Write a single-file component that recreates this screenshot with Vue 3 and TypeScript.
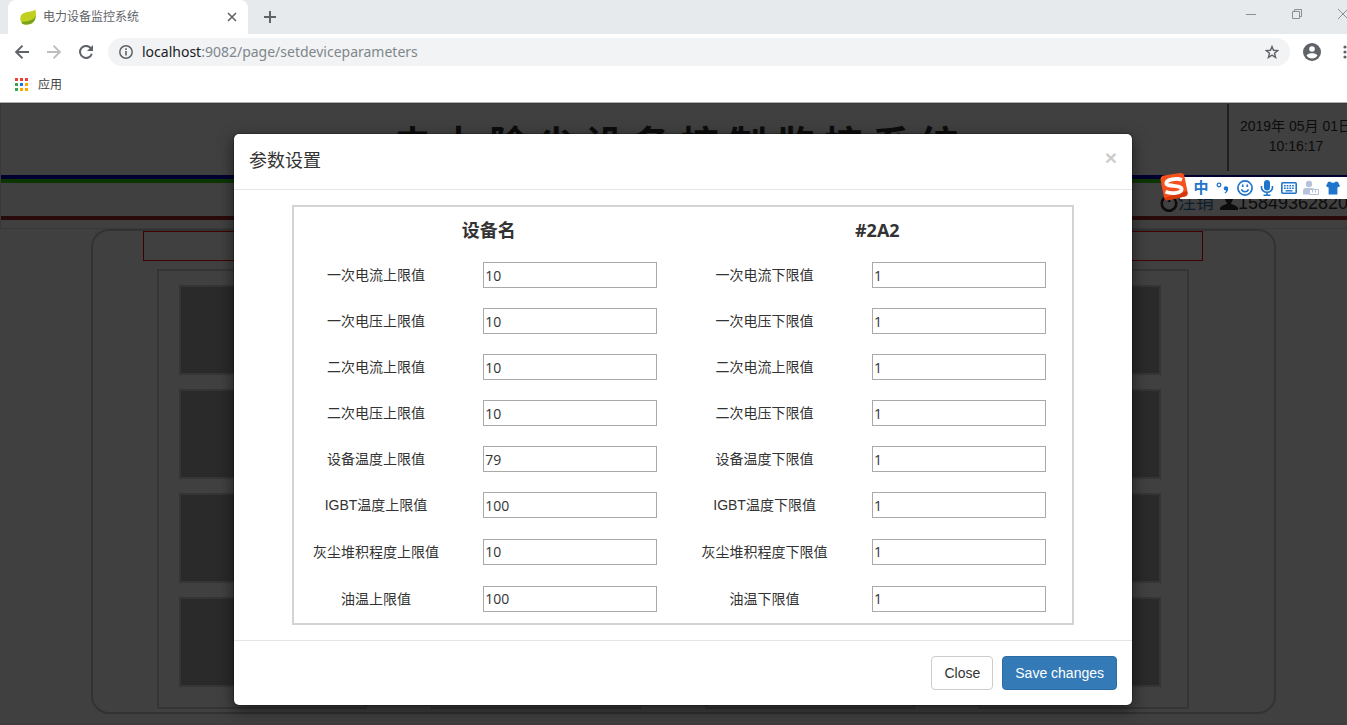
<script setup lang="ts">
import { ref } from 'vue'

interface Limit {
  label: string
  value: string
}

interface LimitRow {
  id: string
  upper: Limit
  lower: Limit
}

const device = '#2A2'
const address = ref('localhost:9082/page/setdeviceparameters')
const [host, path] = [address.value.slice(0, 9), address.value.slice(9)]

const makeRow = (id: string, upper: string, upperValue: string, lower: string): LimitRow => ({
  id,
  upper: { label: upper, value: upperValue },
  lower: { label: lower, value: '1' },
})

const rows = ref<LimitRow[]>([
  makeRow('current1', '一次电流上限值', '10', '一次电流下限值'),
  makeRow('voltage1', '一次电压上限值', '10', '一次电压下限值'),
  makeRow('current2', '二次电流上限值', '10', '二次电流上限值'),
  makeRow('voltage2', '二次电压上限值', '10', '二次电压下限值'),
  makeRow('device-temp', '设备温度上限值', '79', '设备温度下限值'),
  makeRow('igbt-temp', 'IGBT温度上限值', '100', 'IGBT温度下限值'),
  makeRow('dust', '灰尘堆积程度上限值', '10', '灰尘堆积程度下限值'),
  makeRow('oil-temp', '油温上限值', '100', '油温下限值'),
])

const appDots = ['#ea4335', '#ea4335', '#ea4335', '#34a853', '#1a73e8', '#f9ab00', '#34a853', '#f9ab00', '#f9ab00']
</script>

<template>
  <div class="viewport">
    <div class="window">
      <header class="chrome">
        <div class="tab-strip">
          <div class="tab">
            <svg class="favicon" width="16" height="16" viewBox="0 0 16 16" aria-hidden="true">
              <path d="M15.2.3C14 2.200 11.600 2.400 8.500 2.700 4 3.200.3 5 .3 9.500c0 2.300 1 4.500 2.500 5.500 3.500 1.300 8 .9 10.700-1.900C16.400 10 16.400 4.500 15.200.3z" fill="#c1cf1e" />
              <path d="M15.600 6.500c-1.500 3.500-4.600 6-13.300 6.200l-.6 1c.3.6.6.9 1.200 1.300 3.400 1 7.500.9 10.400-1.900 1.600-1.700 2.300-3.900 2.300-6.600z" fill="#7aa31c" />
            </svg>
            <span class="tab-title">电力设备监控系统</span>
            <button class="icon-button" type="button" aria-label="关闭标签页">
              <svg width="10" height="10" viewBox="0 0 10 10"><path d="M1 1l8 8M9 1L1 9" stroke="#5f6368" stroke-width="1.600" /></svg>
            </button>
          </div>
          <button class="icon-button new-tab" type="button" aria-label="新标签页">
            <svg width="12" height="12" viewBox="0 0 12 12"><path d="M6 0v12M0 6h12" stroke="#5f6368" stroke-width="2" /></svg>
          </button>
          <div class="window-controls">
            <button type="button" aria-label="最小化">
              <svg width="10" height="10" viewBox="0 0 10 10"><path d="M0 5.500h10" stroke="#8c8f92" /></svg>
            </button>
            <button type="button" aria-label="还原">
              <svg width="10" height="10" viewBox="0 0 10 10"><path d="M.5 2.500h7v7h-7zM2.500 2.500v-2h7v7h-2" fill="none" stroke="#8c8f92" /></svg>
            </button>
            <button type="button" aria-label="关闭">
              <svg width="12" height="10" viewBox="0 0 12 10"><path d="M1 0l10 10M11 0L1 10" stroke="#8c8f92" /></svg>
            </button>
          </div>
        </div>

        <div class="toolbar">
          <button class="icon-button" type="button" aria-label="后退">
            <svg width="14" height="14" viewBox="0 0 14 14"><path d="M14 7H1.500M7.500.7L1.200 7l6.300 6.300" fill="none" stroke="#5f6368" stroke-width="1.900" /></svg>
          </button>
          <button class="icon-button" type="button" aria-label="前进">
            <svg width="14" height="14" viewBox="0 0 14 14"><path d="M0 7h12.500M6.500.7L12.800 7l-6.300 6.300" fill="none" stroke="#bcbec0" stroke-width="1.900" /></svg>
          </button>
          <button class="icon-button" type="button" aria-label="重新加载">
            <svg width="14" height="14" viewBox="0 0 14 14">
              <path d="M11.600 3A6 6 0 1 0 12.800 8.700" fill="none" stroke="#5f6368" stroke-width="2" />
              <path d="M14 0v6H8z" fill="#5f6368" />
            </svg>
          </button>
          <div class="omnibox">
            <svg width="14" height="14" viewBox="0 0 14 14" aria-hidden="true">
              <circle cx="7" cy="7" r="6.200" fill="none" stroke="#5f6368" stroke-width="1.500" />
              <path d="M7 6v4.500M7 3.300v1.600" stroke="#5f6368" stroke-width="1.600" />
            </svg>
            <span class="url"><span class="host">{{ host }}</span>{{ path }}</span>
            <button class="icon-button" type="button" aria-label="收藏">
              <svg width="14" height="14" viewBox="0 0 14 14"><path d="M7 1.500l1.500 3.800 4.300.3-3.300 2.700 1.100 4.200L7 10.200l-3.600 2.300 1.100-4.200L1.200 5.600l4.300-.3z" fill="none" stroke="#5f6368" stroke-width="1.400" /></svg>
            </button>
          </div>
          <button class="icon-button avatar" type="button" aria-label="用户">
            <svg width="18" height="18" viewBox="0 0 18 18">
              <circle cx="9" cy="9" r="9" fill="#5f6368" />
              <circle cx="9" cy="6" r="2.800" fill="#fff" />
              <path d="M3.500 12.400C4.300 10.800 7 10.200 9 10.200s4.700.6 5.500 2.200C13.300 14.300 11.300 15.400 9 15.400s-4.300-1.100-5.500-3z" fill="#fff" />
            </svg>
          </button>
          <button class="icon-button menu" type="button" aria-label="菜单">
            <svg width="4" height="14" viewBox="0 0 4 14" fill="#5f6368"><circle cx="2" cy="2" r="1.600" /><circle cx="2" cy="7" r="1.600" /><circle cx="2" cy="12" r="1.600" /></svg>
          </button>
        </div>

        <nav class="bookmarks">
          <a href="#apps">
            <svg width="13" height="13" viewBox="0 0 13 13" aria-hidden="true">
              <rect v-for="(dot, i) in appDots" :key="i" :x="(i % 3) * 5" :y="Math.floor(i / 3) * 5" width="3" height="3" :fill="dot" />
            </svg>
            应用
          </a>
        </nav>
      </header>

      <main class="page">
        <div class="site-header">
          <div class="banner">
            <h1>电 力 除 尘 设 备 控 制 监 控 系 统</h1>
            <div class="clock">2019年 05月 01日<br />10:16:17</div>
          </div>
          <div class="stripe blue"></div>
          <div class="stripe green"></div>
          <div class="account">
            <svg width="18" height="18" viewBox="0 0 18 18" aria-hidden="true">
              <path d="M5.500 3.200a7.200 7.200 0 1 0 7 0M9 1v7" fill="none" stroke="#333" stroke-width="2.600" />
            </svg>
            <a href="#logout">注销</a>
            <svg class="person" width="18" height="18" viewBox="0 0 18 18" fill="#333" aria-hidden="true">
              <path d="M9 0c2.500 0 4 1.800 4 4.200 0 2-1 3.800-2 4.800v.7c1.500 1 7 1.800 7 4.800V16H0v-1.500c0-3 5.500-3.800 7-4.800V9C6 8 5 6.200 5 4.200 5 1.800 6.500 0 9 0z" />
            </svg>
            <span>15849362820</span>
          </div>
          <div class="stripe brown"></div>
        </div>

        <section class="board">
          <div class="notice"></div>
          <div class="groups">
            <div v-for="group in 4" :key="group" class="group">
              <div v-for="unit in 4" :key="unit" class="unit"></div>
            </div>
          </div>
        </section>
        <div class="page-end"></div>

        <div class="backdrop"></div>

        <div class="modal-layer">
          <form class="modal" role="dialog" aria-labelledby="modal-title" @submit.prevent>
            <div class="modal-header">
              <h4 id="modal-title">参数设置</h4>
              <button class="dismiss" type="button" aria-label="关闭">×</button>
            </div>
            <div class="modal-body">
              <table>
                <colgroup>
                  <col class="label-col" /><col class="input-col" /><col class="label-col" /><col class="input-col" />
                </colgroup>
                <thead>
                  <tr>
                    <th colspan="2">设备名</th>
                    <th colspan="2">{{ device }}</th>
                  </tr>
                </thead>
                <tbody>
                  <tr v-for="row in rows" :key="row.id">
                    <td><label :for="row.id + '-upper'">{{ row.upper.label }}</label></td>
                    <td><input :id="row.id + '-upper'" v-model="row.upper.value" type="text" /></td>
                    <td><label :for="row.id + '-lower'">{{ row.lower.label }}</label></td>
                    <td><input :id="row.id + '-lower'" v-model="row.lower.value" type="text" /></td>
                  </tr>
                </tbody>
              </table>
            </div>
            <div class="modal-footer">
              <button class="btn" type="button">Close</button>
              <button class="btn primary" type="submit">Save changes</button>
            </div>
          </form>
        </div>
      </main>

      <div class="ime">
        <svg class="ime-logo" width="30" height="30" viewBox="0 0 30 30" aria-hidden="true">
          <path d="M5 3.500L21 1q3.500-.5 4.300 2.700L28.600 20q.6 3.500-2.600 4.400L9.500 28Q6 28.600 5 25.300L1.600 8Q1.200 4.200 5 3.500z" fill="#f4511e" />
          <path d="M5 26l1 1.700q1.500 1 3.500.6L26 24.400q2.200-.7 2.600-2.700L28 19z" fill="#d63a0c" />
          <path d="M23 7.800C17.500 5.800 7.500 7.300 7.300 11c-.2 4.200 15.200 1.500 15.300 6 .1 4.300-9.500 5.200-16.100 2.800" fill="none" stroke="#fff" stroke-width="3.800" />
        </svg>
        <button type="button" class="ime-lang">中</button>
        <button type="button" aria-label="标点">
          <svg width="14" height="14" viewBox="0 0 14 14"><circle cx="3" cy="4" r="1.800" fill="none" stroke="#1f75cb" stroke-width="1.300" /><path d="M9.500 5.200a2.200 2.200 0 0 1 2.700 2.200c0 2.400-1.200 4.100-3.200 5.100l-.5-.9c1-.6 1.500-1.300 1.600-2.200A2.100 2.100 0 0 1 9.500 5.200z" fill="#1f75cb" /></svg>
        </button>
        <button type="button" aria-label="表情">
          <svg width="16" height="16" viewBox="0 0 16 16" fill="none" stroke="#1f75cb"><circle cx="8" cy="8" r="7.100" stroke-width="1.700" /><path d="M5.700 4.500v2.500M10.300 4.500v2.500" stroke-width="1.700" /><path d="M4.500 9.300a3.700 3.700 0 0 0 7 0" stroke-width="1.500" /></svg>
        </button>
        <button type="button" aria-label="语音">
          <svg width="14" height="16" viewBox="0 0 14 16"><rect x="4" y="0" width="6" height="10.500" rx="3" fill="#1f75cb" /><path d="M1.500 6v1.500a5.500 4.800 0 0 0 11 0V6M7 12v3.200M3.500 15.200h7" fill="none" stroke="#1f75cb" stroke-width="1.600" /></svg>
        </button>
        <button type="button" aria-label="软键盘">
          <svg width="16" height="12" viewBox="0 0 16 12"><rect x=".8" y=".8" width="14.400" height="10.400" rx="1" fill="none" stroke="#1f75cb" stroke-width="1.600" /><path d="M3 3.800h10.500M3 6.200h10.500" stroke="#1f75cb" stroke-width="1.500" stroke-dasharray="1.700 1" /><path d="M4.500 8.800h7" stroke="#1f75cb" stroke-width="1.400" /></svg>
        </button>
        <button type="button" aria-label="账户">
          <svg width="16" height="16" viewBox="0 0 16 16"><circle cx="6" cy="4" r="3.200" fill="#b6c1db" /><path d="M0 14.500V11q0-3 3-3h6q2 0 2.500 1.500H6v5z" fill="#b6c1db" /><path d="M6.500 9.500h9v5h-9zM9.500 9.500v3M12.500 9.500v3" fill="#fff" stroke="#b6c1db" /></svg>
        </button>
        <button type="button" aria-label="皮肤">
          <svg width="14" height="14" viewBox="0 0 14 14"><path d="M4.300.5C5 2.200 9 2.200 9.700.5L12 1l2 4.200-2.600 1.300v7H2.600v-7L0 5.200 2 1z" fill="#1f75cb" /></svg>
        </button>
      </div>
    </div>
  </div>
</template>

<style>
html,
body,
#app {
  height: 100%;
}
body {
  margin: 0;
}
</style>

<style scoped>
* {
  box-sizing: border-box;
}
.viewport {
  min-height: 100%;
  display: flex;
  overflow: hidden;
  font-family: 'Liberation Sans', 'Noto Sans CJK SC', sans-serif;
  font-size: 14px;
  line-height: 20px;
  color: #333;
}
/* The window reaches slightly past the right edge of the screen. */
.window {
  position: relative;
  flex: 0 0 calc(100% + 19px);
  display: flex;
  flex-direction: column;
}
button {
  font: inherit;
  cursor: pointer;
}
svg {
  display: block;
  flex: none;
}

.chrome {
  background: #fff;
  border-bottom: 1px solid #b3b0b3;
}
.icon-button {
  display: flex;
  padding: 0;
  border: 0;
  background: none;
}
.tab-strip {
  display: flex;
  align-items: center;
  height: 34px;
  padding-left: 8px;
  background: #e6eaed;
}
.tab {
  display: flex;
  align-items: center;
  width: 240px;
  height: 34px;
  padding: 0 11px 0 12px;
  border-radius: 8px 8px 0 0;
  background: #fff;
}
.tab-title {
  flex: 1;
  margin-left: 7px;
  font-size: 12px;
  line-height: 22px;
  color: #5f6368;
}
.new-tab {
  margin-left: 16px;
}
.window-controls {
  display: flex;
  margin-left: auto;
  align-self: flex-start;
}
.window-controls button {
  display: flex;
  align-items: center;
  justify-content: center;
  width: 46px;
  height: 28px;
  padding: 0;
  border: 0;
  background: none;
}
.toolbar {
  display: flex;
  align-items: center;
  gap: 18px;
  height: 36px;
  padding: 0 19px 0 15px;
}
.omnibox {
  flex: 1;
  display: flex;
  align-items: center;
  height: 28px;
  margin-left: -3px;
  padding: 0 11px;
  border-radius: 14px;
  background: #f1f3f4;
}
.url {
  flex: 1;
  margin-left: 9px;
  font-family: 'Noto Sans', sans-serif;
  font-size: 14px;
  color: #80868b;
}
.host {
  color: #202124;
}
.avatar {
  margin-left: -5px;
}
.menu {
  margin-left: 4px;
}
.bookmarks {
  display: flex;
  align-items: center;
  height: 32px;
  padding: 0 15px 3px;
}
.bookmarks a {
  display: flex;
  align-items: center;
  gap: 10px;
  font-size: 12px;
  color: #3c4043;
  text-decoration: none;
}

.page {
  position: relative;
  flex: 1;
  display: flex;
  flex-direction: column;
  background: #fff;
}
.site-header {
  padding-bottom: 8px;
  border: 1px solid #e4e4e4;
}
.banner {
  display: grid;
  grid-template-columns: 124px 1fr 138px;
  height: 71px;
}
h1 {
  grid-column: 2;
  margin: 0;
  font: bold 38px/78px 'Open Sans', 'Noto Sans CJK SC', sans-serif;
  text-align: center;
  white-space: nowrap;
}
.clock {
  height: 67px;
  padding: 12px 2px 0 0;
  border-left: 2px solid #808080;
  text-align: center;
}
.stripe {
  height: 4px;
}
.blue {
  background: #0000c0;
}
.green {
  background: #30d800;
}
.brown {
  background: #a52a2a;
}
.account {
  display: flex;
  align-items: center;
  justify-content: flex-end;
  height: 33px;
  padding: 6px 17px 0 0;
  font-size: 18px;
}
.account a {
  color: #337ab7;
  text-decoration: none;
}
.person {
  margin-left: 6px;
}
.board {
  flex: none;
  margin: 0 90px 0 91px;
  padding-bottom: 3px;
  border: 2px solid #c8c8c8;
  border-radius: 18px;
}
.notice {
  height: 30px;
  margin: 0 71px 0 50px;
  border: 1px solid #f00;
}
.groups {
  display: flex;
  justify-content: space-between;
  margin: 8px 85px 0 64px;
}
.group {
  display: flex;
  flex-direction: column;
  gap: 14px;
  width: 210px;
  padding: 14px 20px 20px;
  border: 2px solid #d3d3d3;
}
.unit {
  width: 160px;
  height: 90px;
  border: 2px solid #d3d3d3;
  background: #a9a9a9;
}
.page-end {
  height: 2px;
  margin-top: auto;
  background: #fff0f4;
}
.backdrop {
  position: absolute;
  inset: 0;
  background: rgba(0, 0, 0, 0.75);
}

.modal-layer {
  position: absolute;
  inset: 0;
  display: flex;
  align-items: flex-start;
  justify-content: center;
  padding-top: 30px;
}
.modal {
  width: 900px;
  border: 1px solid rgba(0, 0, 0, 0.2);
  border-radius: 6px;
  background: #fff;
  background-clip: padding-box;
  box-shadow: 0 5px 15px rgba(0, 0, 0, 0.5);
}
.modal-header {
  display: flex;
  justify-content: space-between;
  align-items: flex-start;
  padding: 14px 15px 15px;
  border-bottom: 1px solid #e5e5e5;
}
h4 {
  margin: 0;
  font-size: 18px;
  font-weight: 400;
  line-height: 26px;
}
.dismiss {
  padding: 0;
  border: 0;
  background: none;
  font-size: 21px;
  font-weight: 700;
  line-height: 20px;
  color: #ccc;
}
.modal-body {
  padding: 15px;
}
table {
  width: 90%;
  margin: 0 auto;
  table-layout: fixed;
  border: 2px solid #d3d3d3;
  border-spacing: 0;
  text-align: center;
}
.label-col {
  width: 21%;
}
.input-col {
  width: 29%;
}
th,
td {
  padding: 0;
}
th {
  height: 45px;
  font: bold 18px/26px 'Open Sans', 'Noto Sans CJK SC', sans-serif;
}
td {
  height: 46px;
}
tr:nth-child(n + 7) td {
  height: 47px;
}
tbody tr:last-child td {
  height: 48px;
  padding-bottom: 1px;
}
input {
  display: block;
  width: 174px;
  height: 26px;
  margin: 0 auto;
  padding: 1px;
  border: 1px solid #a9a9a9;
  background: #fff;
  font: 14px 'Open Sans', 'Noto Sans CJK SC', sans-serif;
  color: #333;
}
.modal-footer {
  display: flex;
  justify-content: flex-end;
  gap: 9px;
  padding: 15px;
  border-top: 1px solid #e5e5e5;
}
.btn {
  padding: 6px 12px;
  border: 1px solid #ccc;
  border-radius: 4px;
  background: #fff;
  color: #333;
}
.primary {
  border-color: #2e6da4;
  background: #337ab7;
  color: #fff;
}

.ime {
  position: absolute;
  top: 177px;
  right: 0;
  display: flex;
  align-items: center;
  width: 186px;
  height: 22px;
  padding-left: 10px;
  background: #fff;
}
.ime button {
  display: flex;
  align-items: center;
  justify-content: center;
  width: 22px;
  height: 22px;
  padding: 0;
  border: 0;
  background: none;
}
.ime-logo {
  position: absolute;
  left: -21px;
  top: -5px;
}
.ime .ime-lang {
  font-size: 15px;
  font-weight: 700;
  color: #1f75cb;
}
</style>
